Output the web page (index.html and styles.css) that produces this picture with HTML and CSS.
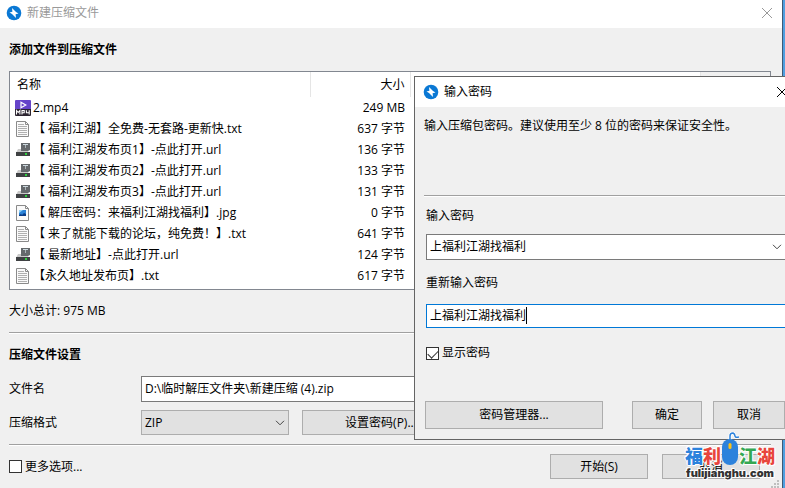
FILE: index.html
```html
<!DOCTYPE html>
<html lang="zh-CN">
<head>
  <meta charset="UTF-8">
  <title>新建压缩文件</title>
  <link rel="stylesheet" href="styles.css">
</head>
<body>
  <!-- shared icons -->
  <svg class="sprite" aria-hidden="true">
    <symbol id="logo" viewBox="0 0 16 16">
      <circle cx="8" cy="8" r="7.3" fill="#0a78d4"/>
      <path d="M6 3 10 7 12.5 8.6 9.6 9.2 10 13 6 9 3.500 7.400 6.400 6.800z" fill="#fff"/>
    </symbol>
    <symbol id="close" viewBox="0 0 12 12">
      <path d="M1 1 11 11M11 1 1 11" fill="none" stroke="currentColor"/>
    </symbol>
    <symbol id="arrow" viewBox="0 0 10 6">
      <path d="M1 .8 5 4.8 9 .8" fill="none" stroke="#444"/>
    </symbol>
    <symbol id="mp4" viewBox="0 0 16 16">
      <rect width="16" height="10" rx="1" fill="#6544c9"/>
      <path d="M6 2.2 10.8 5 6 7.8z" fill="none" stroke="#fff" stroke-width="1.2"/>
      <path d="M0 9h16v6q0 1-1 1H1q-1 0-1-1z" fill="#2b2430"/>
      <path d="M1.5 14.5v-4l1.7 2 1.7-2v4M7 14.5v-4h2.2v2.2H7M11.4 10.3v2.5h3M14.2 10.3v4.2" fill="none" stroke="#fff" stroke-width="1.1"/>
    </symbol>
    <symbol id="txt" viewBox="0 0 16 16">
      <path d="M1.5 .5h9l3 3v12h-12z" fill="#fafafa" stroke="#8a8a8a"/>
      <path d="M10.5 .5v3h3" fill="none" stroke="#8a8a8a"/>
      <path d="M3 3.5h6M3 5.5h9M3 7.5h9M3 9.5h9M3 11.5h9M3 13.5h9" stroke="#b0b0b0"/>
    </symbol>
    <symbol id="jpg" viewBox="0 0 16 16">
      <path d="M1.5 .5h9l3 3v12h-12z" fill="#fafafa" stroke="#8a8a8a"/>
      <path d="M10.5 .5v3h3" fill="none" stroke="#8a8a8a"/>
      <rect x="4" y="5" width="7" height="6" fill="#2b83d8"/>
      <path d="M4 5h4L4 8z" fill="#8fd0f5"/>
      <path d="M4 11v-1l2-1 1 1 2-2 2 1v2z" fill="#0a3c86"/>
    </symbol>
    <symbol id="url" viewBox="0 0 16 16">
      <path d="M3 7h9l2 4H1z" fill="#c9c9c9"/>
      <path d="M6 1h9v7l-2 1H6z" fill="#65696c"/>
      <path d="M8 2h5v1H8z" fill="#cdd9df"/>
      <path d="M10 3h1v3h-1z" fill="#aab4b9"/>
      <rect x="1" y="10" width="14" height="4" fill="#3f4143"/>
      <rect x="10" y="11" width="2" height="2" fill="#2fd040"/>
    </symbol>
  </svg>

  <main class="window">
    <header class="titlebar">
      <svg class="logo"><use href="#logo"/></svg>
      <span>新建压缩文件</span>
      <button class="close" aria-label="关闭"><svg><use href="#close"/></svg></button>
    </header>

    <div class="content">
      <h1>添加文件到压缩文件</h1>
      <div class="file-list">
        <table>
          <colgroup><col class="col-name"><col class="col-size"><col class="col-type"><col></colgroup>
          <thead>
            <tr><th>名称</th><th class="size">大小</th><th></th><td class="corner"></td></tr>
          </thead>
          <tbody>
            <tr><td><div class="file mp4"><svg><use href="#mp4"/></svg>2.mp4</div></td><td class="size">249 MB</td></tr>
            <tr><td><div class="file"><svg><use href="#txt"/></svg>【 福利江湖】全免费-无套路-更新快.txt</div></td><td class="size">637 字节</td></tr>
            <tr><td><div class="file"><svg><use href="#url"/></svg>【 福利江湖发布页1】-点此打开.url</div></td><td class="size">136 字节</td></tr>
            <tr><td><div class="file"><svg><use href="#url"/></svg>【 福利江湖发布页2】-点此打开.url</div></td><td class="size">133 字节</td></tr>
            <tr><td><div class="file"><svg><use href="#url"/></svg>【 福利江湖发布页3】-点此打开.url</div></td><td class="size">131 字节</td></tr>
            <tr><td><div class="file"><svg><use href="#jpg"/></svg>【 解压密码：来福利江湖找福利】.jpg</div></td><td class="size">0 字节</td></tr>
            <tr><td><div class="file"><svg><use href="#txt"/></svg>【 来了就能下载的论坛，纯免费！】.txt</div></td><td class="size">641 字节</td></tr>
            <tr><td><div class="file"><svg><use href="#url"/></svg>【 最新地址】-点此打开.url</div></td><td class="size">124 字节</td></tr>
            <tr><td><div class="file"><svg><use href="#txt"/></svg>【永久地址发布页】.txt</div></td><td class="size">617 字节</td></tr>
          </tbody>
        </table>
      </div>
      <p class="total">大小总计: 975 MB</p>
      <hr>
      <h2>压缩文件设置</h2>
      <div class="settings">
        <label for="filename">文件名</label>
        <input id="filename" type="text" value="D:\临时解压文件夹\新建压缩 (4).zip">
        <label for="format">压缩格式</label>
        <div class="format-row">
          <div class="select">
            <select id="format"><option>ZIP</option></select>
            <svg><use href="#arrow"/></svg>
          </div>
          <button class="set-password">设置密码(P)...</button>
        </div>
      </div>
      <hr>
      <footer class="actions">
        <label class="check"><input type="checkbox">更多选项...</label>
        <button>开始(S)</button>
        <button>取消</button>
      </footer>
    </div>
    <svg class="grip" viewBox="0 0 8 8"><path d="M6 0h2v2H6zM3 3h2v2H3zM6 3h2v2H6zM0 6h2v2H0zM3 6h2v2H3zM6 6h2v2H6z"/></svg>
  </main>

  <section class="dialog" role="dialog" aria-labelledby="dialog-title">
    <header class="titlebar">
      <svg class="logo"><use href="#logo"/></svg>
      <span id="dialog-title">输入密码</span>
      <button class="close" aria-label="关闭"><svg><use href="#close"/></svg></button>
    </header>
    <div class="dialog-body">
      <p>输入压缩包密码。建议使用至少 8 位的密码来保证安全性。</p>
      <hr>
      <div class="fields">
        <label for="password">输入密码</label>
        <div class="combo">
          <input id="password" type="text" value="上福利江湖找福利">
          <button aria-label="展开"><svg><use href="#arrow"/></svg></button>
        </div>
        <label for="repeat">重新输入密码</label>
        <div class="active">
          <input id="repeat" type="text" value="上福利江湖找福利">
          <span class="caret"></span>
        </div>
        <label class="check"><input type="checkbox" checked>显示密码</label>
      </div>
      <div class="dialog-buttons">
        <button class="manager">密码管理器...</button>
        <button class="ok">确定</button>
        <button class="cancel">取消</button>
      </div>
    </div>
  </section>

  <div class="watermark">
    <div class="brand">
      <span class="blue">福</span><span class="red">利</span>
      <svg viewBox="0 0 18 34">
        <path d="M9 9V4q0-3 3-3 2 1 2 3t4 1" fill="none" stroke="#fff" stroke-width="3"/>
        <rect x="1" y="7" width="16" height="26" rx="8" fill="#2c82dc"/>
        <path d="M9 9V4q0-3 3-3 2 1 2 3t4 1" fill="none" stroke="#2c82dc" stroke-width="1.5"/>
        <rect x="7.5" y="11" width="3" height="6" rx="1.5" fill="#fbc21a"/>
      </svg>
      <span class="green">江</span><span class="red">湖</span>
    </div>
    <div class="site">fulijianghu.com</div>
  </div>
</body>
</html>
```

FILE: styles.css
```css
* { box-sizing: border-box; }
body {
  margin: 0;
  min-height: 100vh;
  display: flex;
  position: relative;
  overflow: hidden;
  background: #4f9fe0;
  color: #000;
  font: 12px/16px "Open Sans", "Noto Sans CJK SC", sans-serif;
  text-spacing-trim: space-all;
}
.sprite { position: absolute; width: 0; height: 0; }
button, input, select { font: inherit; color: inherit; border-radius: 0; }
button {
  height: 25px;
  padding: 0;
  background: #e1e1e1;
  border: 1px solid #adadad;
}
input[type="text"] {
  width: 100%;
  height: 26px;
  padding: 0 3px 2px;
  background: #fff;
  border: 1px solid #7a7a7a;
  outline: none;
}
hr {
  height: 2px;
  margin: 0;
  border: 0;
  border-top: 1px solid #a0a0a0;
  background: #fff;
}
.window {
  flex: 1;
  position: relative;
  margin-right: 2px;
  background: #f0f0f0;
  border-right: 1px solid #3c5a78;
}
.titlebar {
  display: flex;
  align-items: center;
  gap: 5px;
  height: 28px;
  padding: 0 9px 3px 6px;
  background: #fff;
}
.logo { width: 16px; height: 16px; }
.close {
  width: 12px;
  height: 12px;
  margin-left: auto;
  background: none;
  border: 0;
}
.close svg { display: block; width: 12px; height: 12px; }
.window .titlebar { color: #999; }
.content { padding: 14px 11px 0 9px; }
h1, h2 { margin: 0; font-size: 12px; line-height: 16px; font-weight: bold; }

/* file list */
.file-list {
  height: 219px;
  margin-top: 13px;
  border: 1px solid #828790;
  background: #fff;
}
table { width: 100%; table-layout: fixed; border-collapse: collapse; }
.col-name { width: 300px; }
.col-size { width: 100px; }
.col-type { width: 290px; }
th { height: 25px; font-weight: normal; text-align: left; border-right: 1px solid #e5e5e5; }
th, td { padding: 0 5px 0 7px; }
.corner { background: #f0f0f0; }
tbody td { height: 21px; padding-left: 5px; }
.size { text-align: right; }
.file { display: flex; align-items: center; gap: 2px; white-space: pre; }
.file svg { width: 16px; height: 16px; }

.total { margin: 13px 0; }
h2 { margin: 13px 0; }
.settings {
  display: grid;
  grid-template-columns: 132px 1fr;
  row-gap: 8px;
  align-items: center;
  margin-bottom: 9px;
}
.format-row { display: flex; gap: 13px; }
.select { position: relative; width: 148px; }
select {
  appearance: none;
  display: block;
  width: 100%;
  height: 25px;
  padding: 0 3px;
  background: #e1e1e1;
  border: 1px solid #adadad;
}
.select svg { position: absolute; right: 4px; top: 10px; width: 10px; height: 6px; }
.set-password { width: 158px; }

.check { display: flex; align-items: center; gap: 3px; }
.check input {
  appearance: none;
  width: 13px;
  height: 13px;
  margin: 0;
  background: #fff;
  border: 1px solid #333;
}
.check input:checked::after {
  content: "";
  display: block;
  width: 9px;
  height: 5px;
  margin: 2px 1px;
  border: solid #333;
  border-width: 0 0 1px 1px;
  transform: rotate(-45deg);
}
.actions { display: flex; align-items: center; gap: 14px; padding: 8px 11px 8px 0; }
.actions .check { margin-right: auto; }
.actions button { width: 98px; }
.grip { position: absolute; right: 3px; bottom: 0; width: 8px; height: 8px; fill: #bfbfbf; }

/* password dialog, runs past the right edge */
.dialog {
  position: absolute;
  left: 414px;
  top: 76px;
  right: -10px;
  background: #f0f0f0;
  border: 1px solid #646464;
}
.dialog .titlebar { height: 30px; padding: 0 6px 1px 8px; }
.dialog-body { padding: 11px 0 10px 9px; }
.dialog p { margin: 0 0 61px; }
.fields { padding: 11px 0 0 2px; }
.combo { display: flex; margin: 10px 0 15px; background: #fff; border: 1px solid #7a7a7a; }
.combo input[type="text"] { height: 24px; border: 0; }
.combo button {
  flex: 0 0 26px;
  height: 24px;
  background: none;
  border: 0;
}
.combo svg { display: block; width: 10px; height: 6px; margin-left: 5px; }
.active { position: relative; margin: 13px 0 17px; }
.active input[type="text"] { display: block; height: 24px; border-color: #0078d7; }
.caret { position: absolute; left: 100px; top: 3px; width: 1px; height: 17px; background: #000; }
.dialog-buttons { display: flex; margin: 40px 0 0 1px; }
.dialog-buttons button { height: 28px; }
.manager { width: 178px; }
.ok { width: 70px; margin: 0 11px 0 29px; }
.cancel { width: 72px; }

.watermark { position: absolute; right: 10px; bottom: 8px; width: 90px; }
.brand { display: flex; align-items: center; justify-content: center; }
.brand span, .site {
  text-shadow: 1px 0 #fff, -1px 0 #fff, 0 1px #fff, 0 -1px #fff, 1px 1px #fff, -1px -1px #fff;
}
.brand span { font: 900 18px/18px "Noto Sans CJK SC", sans-serif; }
.brand .blue { color: #2c82dc; }
.brand .red { color: #e8453c; }
.brand .green { color: #34a853; }
.brand svg { width: 18px; height: 34px; margin-top: -12px; }
.site {
  color: #333;
  font: 900 11px/14px "Inter", sans-serif;
  text-align: center;
}
```
